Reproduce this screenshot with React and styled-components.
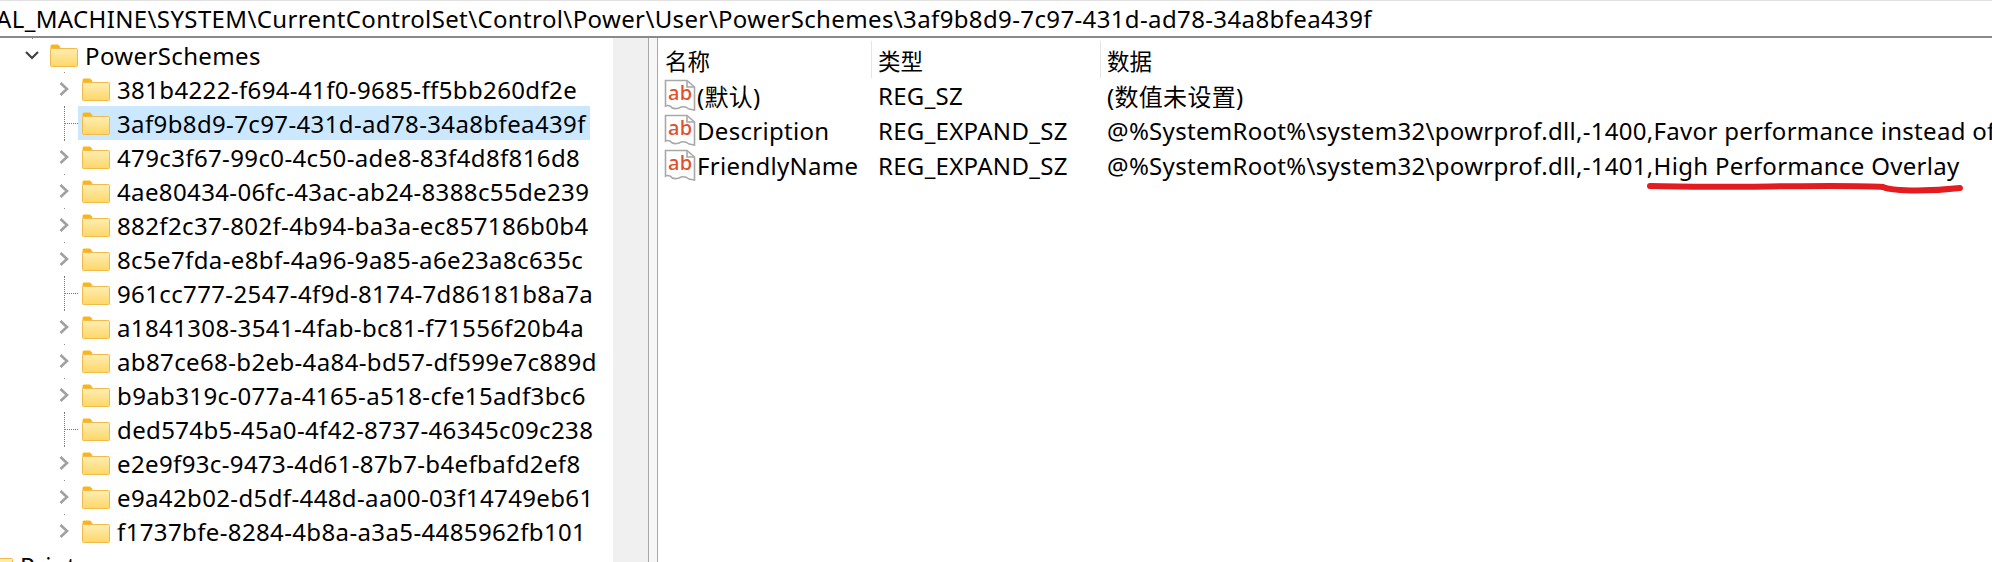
import React from 'react';
import styled, { createGlobalStyle } from 'styled-components';

const GlobalStyle = createGlobalStyle`
  html, body { margin: 0; padding: 0; background: #fff; }
  body { font-family: "Noto Sans", "Noto Sans CJK SC", sans-serif; color: #000; }
`;

const Page = styled.div`
  width: 1992px;
  height: 562px;
  display: flex;
  flex-direction: column;
  overflow: hidden;
  position: relative;
  border-top: 1px solid #e2e2e2;
  box-sizing: border-box;
`;

const AddressBar = styled.div`
  height: 35px;
  flex: none;
  border-bottom: 2px solid #8a8a8a;
  font-size: 24px;
  letter-spacing: 0.37px;
  line-height: 36px;
  white-space: nowrap;
  overflow: hidden;
  text-indent: -4px;
`;

const Panes = styled.div`
  flex: 1;
  display: flex;
  min-height: 0;
`;

const TreePane = styled.div`
  width: 613px;
  flex: none;
  overflow: hidden;
`;

const ScrollTrack = styled.div`
  width: 35px;
  flex: none;
  background: #f0f0f0;
  border-right: 1px solid #a8a8a8;
`;

const Splitter = styled.div`
  width: 8px;
  flex: none;
  background: #f6f6f6;
  border-right: 1px solid #a8a8a8;
`;

const TreeRow = styled.div`
  height: 34px;
  display: flex;
  align-items: center;
  padding-left: ${p => p.$indent}px;
  font-size: 24px;
  letter-spacing: 0.37px;
  white-space: nowrap;
`;

const Twist = styled.span`
  width: 27px;
  height: 34px;
  flex: none;
  position: relative;
  display: flex;
  align-items: center;
  padding-left: 2px;
  box-sizing: border-box;
  &::before {
    content: '';
    position: absolute;
    left: 9px;
    top: 0;
    width: 1px;
    height: 1px;
    background: #888;
  }
`;

const DotGuide = styled.span`
  width: 27px;
  height: 34px;
  flex: none;
  position: relative;
  &::before {
    content: '';
    position: absolute;
    left: 9px;
    top: 0;
    height: 100%;
    border-left: 1px dotted #777;
  }
  &::after {
    content: '';
    position: absolute;
    left: 9px;
    top: 17px;
    width: 14px;
    border-top: 1px dotted #777;
  }
`;

const RowBody = styled.span`
  display: flex;
  align-items: center;
  height: 34px;
  padding: 0 4px;
  margin-left: ${p => p.$shift ?? -4}px;
  gap: 7px;
  background: ${p => (p.$selected ? '#cce8ff' : 'transparent')};
`;

const ListPane = styled.div`
  flex: 1;
  min-width: 0;
  overflow: hidden;
`;

const ListHeader = styled.div`
  height: 40px;
  display: grid;
  grid-template-columns: 214px 229px 1fr;
  font-size: 22.5px;
  font-family: "Noto Sans CJK SC", sans-serif;
`;

const HeaderCell = styled.div`
  display: flex;
  align-items: center;
  padding-left: ${p => p.$pad}px;
  border-right: ${p => (p.$last ? 'none' : '1px solid #e5e5e5')};
  margin-top: 3px;
`;

const ListRow = styled.div`
  height: 35px;
  display: grid;
  grid-template-columns: 214px 229px 1fr;
  align-items: center;
  font-size: 24px;
  letter-spacing: 0.3px;
  white-space: nowrap;
`;

const NameCell = styled.div`
  display: flex;
  align-items: center;
  padding-left: 6px;
  gap: 1px;
`;

const TypeCell = styled.div`
  padding-left: 6px;
`;

const DataCell = styled.div`
  padding-left: 6px;
  overflow: hidden;
`;

const Marker = styled.svg`
  position: absolute;
  left: 1640px;
  top: 176px;
`;

const Folder = () => (
  <svg width="28" height="23" viewBox="0 0 28 23" style={{ flex: 'none' }}>
    <defs>
      <linearGradient id="fold" x1="0" y1="0" x2="0" y2="1">
        <stop offset="0" stopColor="#fdeeb4" />
        <stop offset="1" stopColor="#fdd768" />
      </linearGradient>
    </defs>
    <path d="M0.5 2 Q0.5 0.5 2 0.5 H8 L11 3.5 H10 L8 6 H0.5 Z" fill="#fdb515" />
    <rect x="0.5" y="4.5" width="27" height="18" rx="1" fill="url(#fold)" stroke="#f1bb4c" />
  </svg>
);

const Chevron = ({ open }) => (
  <svg width="14" height="14" viewBox="0 0 14 14">
    {open ? (
      <path d="M1 4 L7 10 L13 4" fill="none" stroke="#404040" strokeWidth="2.2" />
    ) : (
      <path d="M3.5 1 L10 7 L3.5 13" fill="none" stroke="#a0a0a0" strokeWidth="2.6" />
    )}
  </svg>
);

const AbIcon = () => (
  <svg width="32" height="33" viewBox="0 0 32 33" style={{ flex: 'none' }}>
    <path
      d="M1.5 1.5 H23 L30.5 8 V31 L25 30 Q20 26 15 29 Q9 31 6 27 Q3 26 1.5 27 Z"
      fill="#fff"
      stroke="#a8a8a8"
      strokeWidth="1.6"
    />
    <path d="M23 1.5 V8 H30.5" fill="none" stroke="#a8a8a8" strokeWidth="1.6" />
    <text x="4" y="21" fontFamily="'Noto Sans', sans-serif" fontSize="20" fontWeight="500" fill="#e2502f">ab</text>
  </svg>
);

const schemes = [
  { id: '381b4222-f694-41f0-9685-ff5bb260df2e', kids: true },
  { id: '3af9b8d9-7c97-431d-ad78-34a8bfea439f', selected: true },
  { id: '479c3f67-99c0-4c50-ade8-83f4d8f816d8', kids: true },
  { id: '4ae80434-06fc-43ac-ab24-8388c55de239', kids: true },
  { id: '882f2c37-802f-4b94-ba3a-ec857186b0b4', kids: true },
  { id: '8c5e7fda-e8bf-4a96-9a85-a6e23a8c635c', kids: true },
  { id: '961cc777-2547-4f9d-8174-7d86181b8a7a' },
  { id: 'a1841308-3541-4fab-bc81-f71556f20b4a', kids: true },
  { id: 'ab87ce68-b2eb-4a84-bd57-df599e7c889d', kids: true },
  { id: 'b9ab319c-077a-4165-a518-cfe15adf3bc6', kids: true },
  { id: 'ded574b5-45a0-4f42-8737-46345c09c238' },
  { id: 'e2e9f93c-9473-4d61-87b7-b4efbafd2ef8', kids: true },
  { id: 'e9a42b02-d5df-448d-aa00-03f14749eb61', kids: true },
  { id: 'f1737bfe-8284-4b8a-a3a5-4485962fb101', kids: true },
];

const values = [
  { name: '(默认)', type: 'REG_SZ', data: '(数值未设置)' },
  {
    name: 'Description',
    type: 'REG_EXPAND_SZ',
    data: '@%SystemRoot%\\system32\\powrprof.dll,-1400,Favor performance instead of',
  },
  {
    name: 'FriendlyName',
    type: 'REG_EXPAND_SZ',
    data: '@%SystemRoot%\\system32\\powrprof.dll,-1401,High Performance Overlay',
  },
];

export default function App() {
  return (
    <Page>
      <GlobalStyle />
      <AddressBar>AL_MACHINE\SYSTEM\CurrentControlSet\Control\Power\User\PowerSchemes\3af9b8d9-7c97-431d-ad78-34a8bfea439f</AddressBar>
      <Panes>
        <TreePane>
          <TreeRow $indent={23}>
            <Twist><Chevron open /></Twist>
            <RowBody><Folder />PowerSchemes</RowBody>
          </TreeRow>
          {schemes.map(s => (
            <TreeRow key={s.id} $indent={55}>
              {s.kids ? <Twist><Chevron /></Twist> : <DotGuide />}
              <RowBody $selected={s.selected}><Folder />{s.id}</RowBody>
            </TreeRow>
          ))}
          <TreeRow $indent={0}>
            <RowBody $shift={-19}><Folder />Print</RowBody>
          </TreeRow>
        </TreePane>
        <ScrollTrack />
        <Splitter />
        <ListPane>
          <ListHeader>
            <HeaderCell $pad={7}>名称</HeaderCell>
            <HeaderCell $pad={6}>类型</HeaderCell>
            <HeaderCell $pad={6} $last>数据</HeaderCell>
          </ListHeader>
          {values.map(v => (
            <ListRow key={v.name}>
              <NameCell><AbIcon />{v.name}</NameCell>
              <TypeCell>{v.type}</TypeCell>
              <DataCell>{v.data}</DataCell>
            </ListRow>
          ))}
        </ListPane>
      </Panes>
      <Marker width="330" height="24" viewBox="0 0 330 24">
        <path
          d="M10 9 C70 11 130 9 190 9 C215 9 232 9 243 10 C255 15 295 14 320 11"
          fill="none"
          stroke="#e51c1f"
          strokeWidth="6"
          strokeLinecap="round"
        />
      </Marker>
    </Page>
  );
}
